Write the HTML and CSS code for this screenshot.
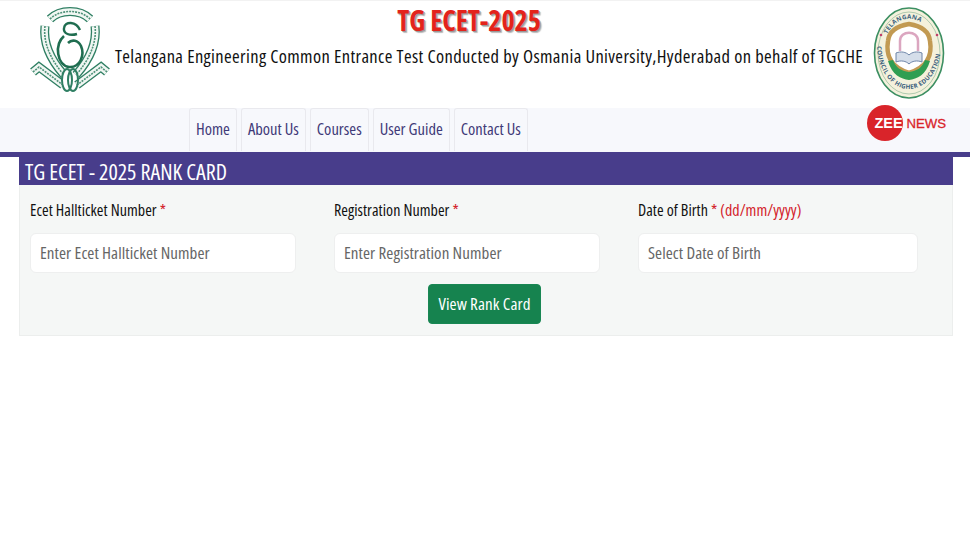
FILE: index.html
```html
<!DOCTYPE html>
<html lang="en">
<head>
    <meta charset="UTF-8">
    <meta name="viewport" content="width=device-width, initial-scale=1.0">
    <title>TG ECET-2025 Rank Card</title>
    <link rel="stylesheet" href="styles.css">
</head>
<body>
    <header class="top-header">
        <svg class="logo-ou" viewBox="0 0 80 86" fill="none">
            <g class="band-outer">
                <path id="ou-left" d="M15 19 C13 35 20 52 34 68"/>
                <path id="ou-right" d="M65 19 C67 35 60 52 46 68"/>
                <path id="ou-top" d="M20 12 C30 2 50 2 60 12"/>
                <path id="ou-rib-l" d="M3 65 L9 60 L33 78"/>
                <path id="ou-rib-r" d="M77 65 L71 60 L47 78"/>
            </g>
            <g class="band-inner">
                <use href="#ou-left"/>
                <use href="#ou-right"/>
                <use href="#ou-top"/>
                <use href="#ou-rib-l"/>
                <use href="#ou-rib-r"/>
            </g>
            <g class="band-text">
                <use href="#ou-left"/>
                <use href="#ou-right"/>
                <use href="#ou-top"/>
                <use href="#ou-rib-l"/>
                <use href="#ou-rib-r"/>
            </g>
            <ellipse cx="37" cy="73" rx="5" ry="11" fill="#fff" stroke="#2f7f63" stroke-width="2"/>
            <ellipse cx="43" cy="73" rx="5" ry="11" fill="none" stroke="#2f7f63" stroke-width="2"/>
            <path d="M50 23 C46 14 35 14 34 21 C33 27 40 29 47 27" stroke="#1f6d50" stroke-width="2.4"/>
            <path d="M34 29 C24 38 27 58 39 60 C50 61 55 48 51 39 C48 33 42 32 38 36" stroke="#1f6d50" stroke-width="2.6"/>
        </svg>
        <div class="header-text">
            <div class="exam-title">TG ECET-2025</div>
            <div class="exam-subtitle">Telangana Engineering Common Entrance Test Conducted by Osmania University,Hyderabad on behalf of TGCHE</div>
        </div>
        <svg class="logo-tche" viewBox="0 0 72 92">
            <defs>
                <path id="arc-top" d="M12 34 A25 31 0 0 1 60 34"/>
                <path id="arc-bottom" d="M4 38 A32 44 0 0 0 68 38"/>
            </defs>
            <ellipse cx="36" cy="46" rx="34.5" ry="45" fill="#f4f1dc" stroke="#3c8f62" stroke-width="1.6"/>
            <ellipse cx="36" cy="46" rx="31" ry="41" fill="none" stroke="#7fb08e" stroke-width="0.6"/>
            <text class="ring-text"><textPath href="#arc-top" startOffset="10%">TELANGANA</textPath></text>
            <text class="ring-text"><textPath href="#arc-bottom" startOffset="1%">COUNCIL OF HIGHER EDUCATION</textPath></text>
            <circle cx="8" cy="28" r="1.3" fill="#c0406a"/>
            <circle cx="64" cy="28" r="1.3" fill="#c0406a"/>
            <path d="M15 34 C16 24 24 19 36 17 C48 19 56 24 57 34 C59 46 56 60 36 66 C16 60 13 46 15 34 Z" fill="#fff" stroke="#c29a52" stroke-width="4.5"/>
            <path d="M15 54 C19 68 28 72 36 73 C44 72 53 68 57 54 L52 53 C49 61 44 64 36 65 C28 64 23 61 20 53 Z" fill="#2f9e52"/>
            <path d="M27 44 L27 34 C27 23 45 23 45 34 L45 44" fill="none" stroke="#dba6c0" stroke-width="2.5"/>
            <path d="M23 55 L23 46 C28 44 33 45 36 48 C39 45 44 44 49 46 L49 55 C44 53 39 54 36 57 C33 54 28 53 23 55 Z" fill="#d5deea" stroke="#6d84a8"/>
        </svg>
    </header>

    <nav class="main-nav">
        <a class="nav-item" href="#">Home</a>
        <a class="nav-item" href="#">About Us</a>
        <a class="nav-item" href="#">Courses</a>
        <a class="nav-item" href="#">User Guide</a>
        <a class="nav-item" href="#">Contact Us</a>
        <div class="zee-logo"><span class="zee-circle">ZEE</span><span class="zee-news">NEWS</span></div>
    </nav>

    <main class="rank-card">
        <h1 class="card-title">TG ECET - 2025 RANK CARD</h1>
        <form class="card-body">
            <div class="field-row">
                <div class="field">
                    <label for="hallticket">Ecet Hallticket Number <span class="req">*</span></label>
                    <input id="hallticket" type="text" placeholder="Enter Ecet Hallticket Number">
                </div>
                <div class="field">
                    <label for="regno">Registration Number <span class="req">*</span></label>
                    <input id="regno" type="text" placeholder="Enter Registration Number">
                </div>
                <div class="field">
                    <label for="dob">Date of Birth <span class="req">* (dd/mm/yyyy)</span></label>
                    <input id="dob" type="text" placeholder="Select Date of Birth">
                </div>
            </div>
            <button class="view-btn" type="button">View Rank Card</button>
        </form>
    </main>
</body>
</html>
```

FILE: styles.css
```css
* {
    box-sizing: border-box;
}
body {
    margin: 0;
    background-color: #fff;
    font-family: "Open Sans", "Noto Sans", sans-serif;
    font-stretch: 75%;
    color: #111;
}
.top-header {
    display: flex;
    align-items: flex-start;
    height: 108px;
    padding: 6px 25px 0 30px;
    border-top: 1px solid #f2f2f2;
}
.logo-ou {
    width: 80px;
    height: 86px;
    flex-shrink: 0;
}
.band-outer {
    stroke: #2f7f63;
    stroke-width: 9;
}
.band-inner {
    stroke: #f1f7f3;
    stroke-width: 6.4;
}
.band-text {
    stroke: #4f9179;
    stroke-width: 1.6;
    stroke-dasharray: 2 1;
}
.header-text {
    flex: 1;
    padding-left: 5px;
}
.exam-title {
    padding-right: 50px;
    font-size: 28px;
    font-weight: 700;
    line-height: 27px;
    color: #e3231b;
    text-align: center;
    text-shadow: 1px 1px 0 #999, 2px 2px 1px #bbb;
}
.exam-subtitle {
    margin-top: 10px;
    font-size: 18.5px;
    font-weight: 500;
    letter-spacing: 0.37px;
    line-height: 24px;
    white-space: nowrap;
}
.logo-tche {
    width: 72px;
    height: 92px;
    flex-shrink: 0;
}
.ring-text {
    font-size: 6.2px;
    font-weight: 700;
    font-stretch: 100%;
    letter-spacing: 0.3px;
    fill: #3b5f7c;
}
.main-nav {
    display: flex;
    align-items: flex-end;
    height: 49px;
    padding: 0 0 1px 189px;
    gap: 4px;
    background-color: #f7f8fc;
    border-bottom: 5px solid #483d8b;
}
.nav-item {
    display: flex;
    align-items: center;
    height: 43px;
    padding: 0 6px 3px;
    border: 1px solid #e9e9ee;
    border-bottom: none;
    border-radius: 3px 3px 0 0;
    font-size: 16.5px;
    color: #3f3a78;
    text-decoration: none;
}
.zee-logo {
    display: flex;
    align-items: center;
    align-self: flex-start;
    margin-top: -3px;
    margin-left: auto;
    margin-right: 24px;
}
.zee-circle {
    width: 36px;
    height: 36px;
    padding-left: 7px;
    border-radius: 50%;
    background-color: #d9242a;
    color: #fff;
    font-family: "Liberation Sans", sans-serif;
    font-size: 14.5px;
    font-weight: 700;
    line-height: 36px;
    white-space: nowrap;
}
.zee-news {
    margin-left: 3px;
    font-family: "Liberation Sans", sans-serif;
    font-size: 13.2px;
    color: #d9242a;
    -webkit-text-stroke: 0.3px #d9242a;
}
.rank-card {
    margin: 0 17px 0 19px;
}
.card-title {
    height: 28px;
    margin: 0;
    padding-left: 6px;
    background-color: #483d8b;
    color: #fff;
    font-size: 22px;
    font-weight: 500;
    line-height: 28px;
    white-space: nowrap;
}
.card-body {
    display: flex;
    flex-direction: column;
    align-items: center;
    height: 151px;
    padding: 14px 10px 0;
    background-color: #f5f7f6;
    border: 1px solid #eceeed;
    border-top: none;
}
.field-row {
    display: grid;
    grid-template-columns: 266px 266px 280px;
    gap: 38px;
    width: 100%;
}
.field label {
    display: block;
    height: 34px;
    font-size: 16px;
    font-weight: 500;
    letter-spacing: 0.05px;
    line-height: 22px;
}
.req {
    color: #d3222a;
}
.field input {
    width: 100%;
    height: 40px;
    padding: 0 9px 2px;
    border: 1px solid #eeefef;
    border-radius: 6px;
    background-color: #fff;
    font-family: inherit;
    font-stretch: inherit;
    font-size: 17px;
    letter-spacing: 0.08px;
}
.field input::placeholder {
    color: #666;
    opacity: 1;
}
.view-btn {
    width: 113px;
    height: 40px;
    margin-top: 11px;
    margin-right: 3px;
    padding: 0 0 2px;
    border: 1px solid #198754;
    border-radius: 4px;
    background-color: #16834f;
    color: #fff;
    font-family: inherit;
    font-stretch: inherit;
    font-size: 17px;
    letter-spacing: 0.1px;
}
```
